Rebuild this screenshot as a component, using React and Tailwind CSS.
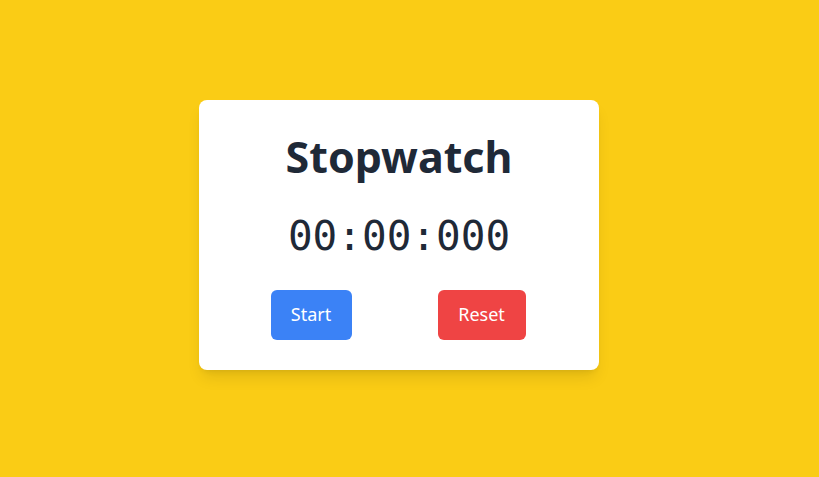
export default function App() {
  return (
    <div className="min-h-screen w-full bg-[#facc15] flex items-center justify-center pr-[21px] pb-[8px]" style={{ minHeight: "477px" }}>
      <div className="w-[400px] bg-white rounded-lg shadow-lg pt-[29px] pb-[30px] flex flex-col items-center">
        <h1 className="text-[43px] leading-[56px] font-bold text-[#1f2937] font-['Noto_Sans',sans-serif]">Stopwatch</h1>
        <div className="mt-[27px] text-[41px] leading-[48px] text-[#1f2937] font-['DejaVu_Sans_Mono',monospace]">00:00:000</div>
        <div className="mt-[30px] mr-[2px] flex justify-center gap-[86px] font-['Noto_Sans',sans-serif]">
          <button className="h-[50px] w-[81px] rounded-md bg-[#3b82f6] text-white text-[18px]">Start</button>
          <button className="h-[50px] w-[88px] rounded-md bg-[#ef4444] text-white text-[18px]">Reset</button>
        </div>
      </div>
    </div>
  );
}
